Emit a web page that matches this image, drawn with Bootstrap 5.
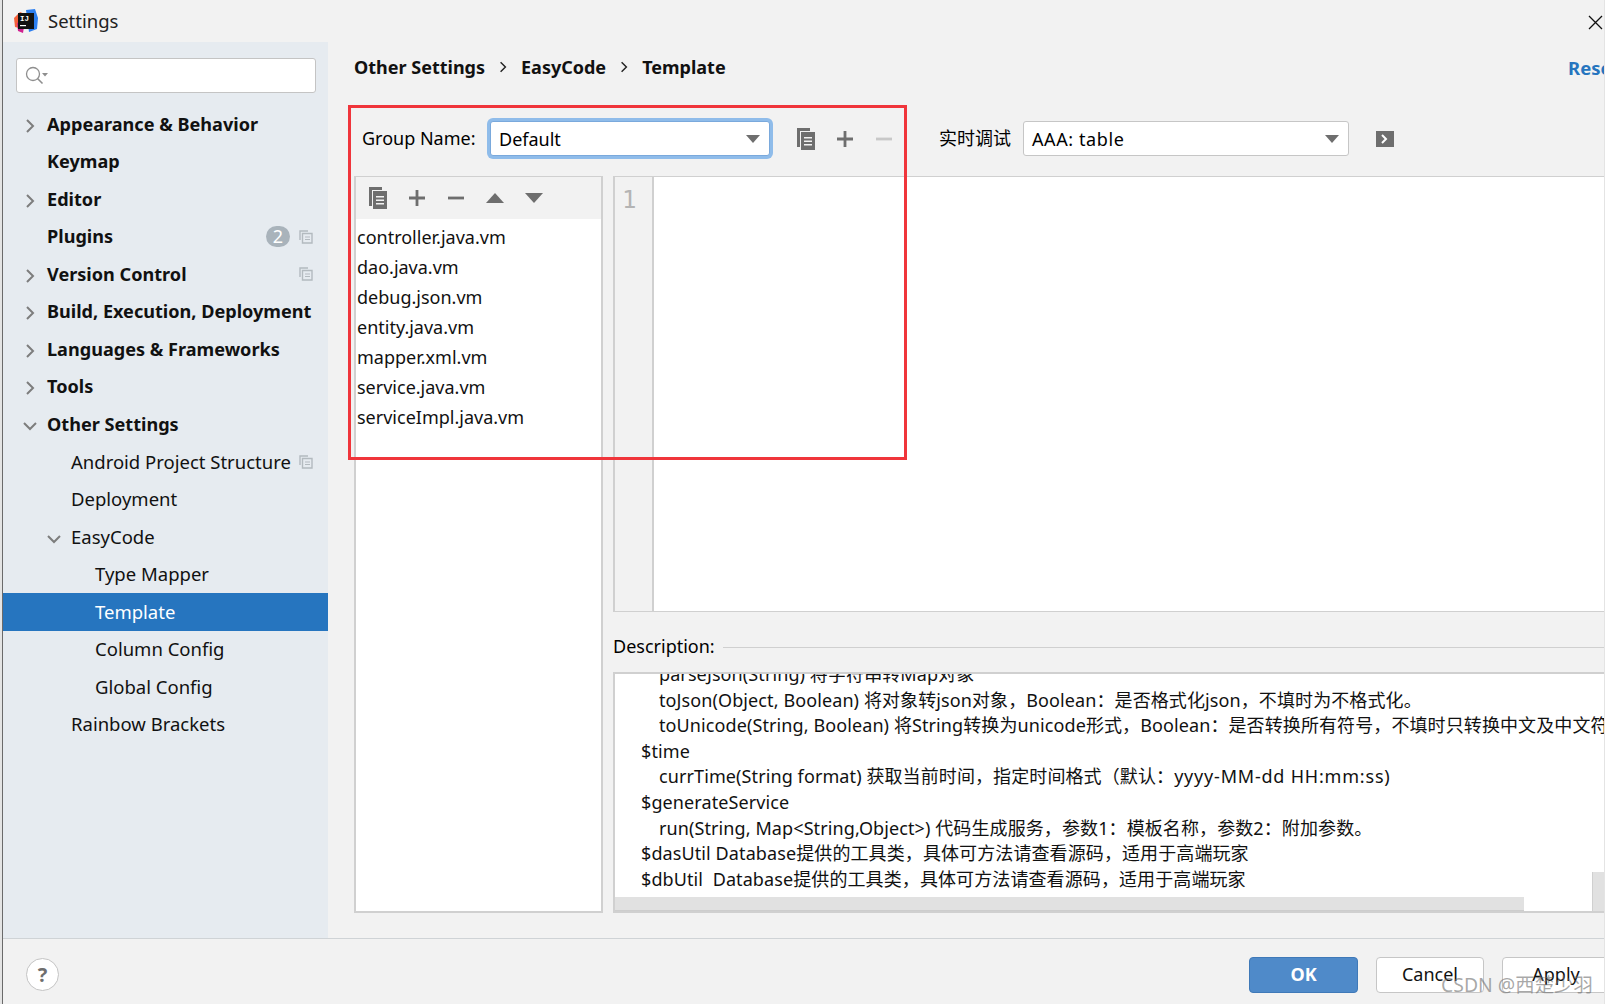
<!DOCTYPE html>
<html lang="zh-CN">
<head>
    <meta charset="UTF-8">
    <title>Settings</title>
    <link href="https://cdn.jsdelivr.net/npm/bootstrap@5.3.3/dist/css/bootstrap.min.css" rel="stylesheet">
    <style>
        html, body { height: 100%; overflow: hidden; }
        body {
            background-color: #e4e4e4;
            color: #000;
            font-family: "Noto Sans", "Noto Sans CJK SC", sans-serif;
            font-size: 18px;
        }
        .settings-win {
            width: 1602px;
            height: 1004px;
            margin-left: 2px;
            border-left: 1px solid #6a6a6a;
            background-color: #f2f2f2;
            position: relative;
            overflow: hidden;
        }
        .title-bar { height: 42px; padding-left: 11px; font-size: 18.5px; flex: none; }
        .title-text { margin-left: 10px; color: #222; }
        .close-x { position: absolute; left: 1585px; top: 15px; }

        /* sidebar */
        .side-pane { width: 325px; background-color: #e6ebf0; flex: none; }
        .search-box {
            margin: 16px 12px 12.5px 13px;
            height: 35px;
            width: 300px;
            background-color: #fff;
            border: 1px solid #c4c4c4;
            border-radius: 3px;
            padding-left: 8px;
        }
        .tree-row { height: 37.5px; padding-right: 15px; font-size: 18.5px; color: #111; white-space: nowrap; }
        .tree-row .arrow-slot { width: 44px; flex: none; padding-left: 22px; }
        .arrow-slot .open-arrow { margin-left: -2px; }
        .lvl-1 .arrow-slot { width: 68px; padding-left: 46px; }
        .lvl-2 .arrow-slot { width: 92px; }
        .tree-top { font-weight: 700; font-size: 18.1px; }
        .tree-row.is-current { background-color: #2675bf; color: #fff; }
        .count-pill {
            width: 24px;
            height: 21px;
            line-height: 21px;
            border-radius: 11px;
            background-color: #a9b3bb;
            color: #fff;
            text-align: center;
            font-size: 18px;
            margin-right: 9px;
        }

        /* main pane */
        .main-pane { padding: 0 0 25px 27px; min-width: 0; flex: 1 1 auto; }
        .crumb-row { height: 50px; font-weight: 700; font-size: 18px; flex: none; margin-left: -1px; }
        .crumb-row .breadcrumb { margin: 0; color: #111; }
        .crumb-sep { margin: 0 14px; }
        .reset-link { position: absolute; left: 1565px; top: 54px; color: #2675bf; font-weight: 700; font-size: 18.5px; text-decoration: none; }
        .group-row { height: 35px; margin: 29px 0 20px; flex: none; }
        .group-label { margin-left: 7px; width: 128px; }
        .combo-box {
            height: 35px;
            background-color: #fff;
            border: 1px solid #c6c6c6;
            border-radius: 3px;
            padding: 1px 9px 0 8px;
            flex: none;
        }
        .combo-focus { width: 280px; border-color: #7aa9dc; box-shadow: 0 0 0 3px #8fbcea; }
        .combo-plain { width: 326px; margin-left: -1px; }
        .combo-wide-text { letter-spacing: .6px; }
        .debug-label { margin-left: 36px; width: 85px; font-size: 18px; flex: none; }
        .tool-btn { width: 39px; height: 24px; }
        .group-tools { margin-left: 16px; }
        .run-icon { margin-left: 27px; }

        .work-area { min-height: 0; gap: 10px; }
        .file-pane { width: 249px; margin-left: -1px; flex: none; border: 2px solid #d0d0d0; background-color: #fff; border-top-width: 1px; }
        .file-tools { height: 42px; background-color: #f2f2f2; padding-left: 2px; }
        .file-list { padding-top: 3px; }
        .file-list .list-group-item { padding: 0 0 0 1px; height: 30px; line-height: 30px; border: 0; background: transparent; color: #111; }
        .editor-col { min-width: 0; }
        .editor-box { height: 436px; border-top: 1px solid #d0d0d0; border-bottom: 1px solid #d0d0d0; background-color: #fff; flex: none; }
        .line-gutter {
            width: 41px;
            background-color: #f2f2f2;
            border-left: 2px solid #d0d0d0;
            border-right: 2px solid #d0d0d0;
            color: #b4b4b4;
            font-size: 24px;
            padding-left: 7px;
            line-height: 46px;
            font-family: "DejaVu Sans Mono", monospace;
        }
        .desc-head { height: 60px; padding-top: 9px; flex: none; }
        .desc-rule { height: 1px; background-color: #d0d0d0; margin: 1px 0 0 8px; }
        .desc-box {
            height: 241px;
            border: 2px solid #d0d0d0;
            border-right: 0;
            background-color: #fff;
            overflow: hidden;
            position: relative;
            flex: none;
        }
        .desc-lines { margin-top: -12px; padding-left: 26px; line-height: 25.6px; font-size: 18px; letter-spacing: .1px; color: #111; }
        .desc-lines > div { white-space: pre; }
        .desc-lines .sub-line { padding-left: 18px; }
        .date-fmt { letter-spacing: .8px; }
        .h-thumb { position: absolute; left: 0; width: 909px; top: 223px; height: 14px; background-color: #e1e1e1; border-bottom: 1px solid #cdcdcd; }
        .v-thumb { position: absolute; left: 977px; top: 198px; width: 13px; height: 39px; background-color: #e1e1e1; border-left: 1px solid #d0d0d0; }

        /* footer */
        .foot-bar { height: 66px; border-top: 1px solid #cfd3d6; flex: none; padding: 6px 0 0 23px; }
        .help-btn {
            width: 33px;
            height: 33px;
            border-radius: 50%;
            background-color: #fff;
            border: 1px solid #c4c4c4;
            color: #6e6e6e;
            font-weight: 700;
            font-size: 20px;
            text-align: center;
            line-height: 31px;
            flex: none;
        }
        .dialog-btns { margin-left: 1190px; gap: 18px; }
        .dialog-btn {
            width: 108px;
            height: 36px;
            padding: 0;
            font-size: 18px;
            border-radius: 4px;
            background-color: #fff;
            border: 1px solid #c6c6c6;
            color: #111;
            flex: none;
        }
        .dialog-btn.btn-primary { background-color: #4f8ac9; border-color: #3f79b8; color: #fff; font-weight: 700; width: 109px; }
        .red-mark { position: absolute; left: 345px; top: 105px; width: 559px; height: 355px; border: 3px solid #f0353b; pointer-events: none; }
        .csdn-mark { position: absolute; left: 1438px; top: 970px; color: rgba(110,110,110,.6); font-size: 19.4px; white-space: nowrap; }
    </style>
</head>
<body>
    <svg width="0" height="0" class="position-absolute">
        <symbol id="ic-copy" viewBox="0 0 20 24">
            <path fill="#6e6e6e" d="M1 1h13v3H4v16H1z"/>
            <path fill="#6e6e6e" d="M5 5h14v18H5z"/>
            <path fill="#f2f2f2" d="M8 10h8v1.6H8zM8 13.5h8v1.6H8zM8 17h8v1.6H8z"/>
        </symbol>
        <symbol id="ic-plus" viewBox="0 0 16 16"><path fill="#6e6e6e" d="M6.600 0h2.800v6.600H16v2.800H9.400V16H6.600V9.400H0V6.600h6.600z"/></symbol>
        <symbol id="ic-minus" viewBox="0 0 16 16"><path fill="currentColor" d="M0 6.600h16v2.800H0z"/></symbol>
        <symbol id="ic-up" viewBox="0 0 18 10"><path fill="#6e6e6e" d="M9 0l9 10H0z"/></symbol>
        <symbol id="ic-down" viewBox="0 0 18 10"><path fill="#6e6e6e" d="M0 0h18L9 10z"/></symbol>
        <symbol id="ic-right" viewBox="0 0 10 14"><path fill="none" stroke="#7d7d7d" stroke-width="2" d="M2 1l6 6-6 6"/></symbol>
        <symbol id="ic-open" viewBox="0 0 14 10"><path fill="none" stroke="#7d7d7d" stroke-width="2" d="M1 2l6 6 6-6"/></symbol>
        <symbol id="ic-proj" viewBox="0 0 14 14">
            <path fill="none" stroke="#b3babf" stroke-width="1.400" d="M1 10V1h8M3.500 3.500h9.500v9.500H3.500z"/>
            <path stroke="#b3babf" stroke-width="1.200" d="M6 7h5M6 9.500h5"/>
        </symbol>
    </svg>

    <div class="settings-win d-flex flex-column">
        <!-- barra de titulo -->
        <div class="title-bar d-flex align-items-center">
            <svg width="24" height="24" viewBox="0 0 24 24">
                <path fill="#f5603a" d="M0 9l6-6 5 2-6 14-4-1z"/>
                <path fill="#d0218f" d="M3 14l8-2-2 12-5-2z"/>
                <path fill="#2d7ff0" d="M12 1l9-1 3 9-1 11-8 3z"/>
                <rect x="4" y="4" width="16" height="16" fill="#111"/>
                <text x="6" y="12" fill="#fff" font-size="7.500" font-weight="700" font-family="Liberation Mono, monospace">IJ</text>
                <rect x="6" y="16" width="6" height="1.200" fill="#fff"/>
            </svg>
            <span class="title-text">Settings</span>
        </div>
        <svg class="close-x" width="15" height="15" viewBox="0 0 15 15"><path stroke="#111" stroke-width="1.300" d="M1 1l13 13M14 1L1 14"/></svg>

        <div class="d-flex flex-grow-1" style="min-height:0">
            <!-- arbol lateral -->
            <div class="side-pane">
                <div class="search-box d-flex align-items-center">
                    <svg width="24" height="20" viewBox="0 0 24 20">
                        <circle cx="8" cy="8" r="6.500" fill="none" stroke="#8e8e8e" stroke-width="1.300"/>
                        <path stroke="#8e8e8e" stroke-width="1.600" d="M12.500 12.500l5 5"/>
                        <path fill="#8e8e8e" d="M17 7h6l-3 3.500z"/>
                    </svg>
                </div>
                <div class="tree-row tree-top d-flex align-items-center"><span class="arrow-slot"><svg width="10" height="14"><use href="#ic-right"/></svg></span>Appearance &amp; Behavior</div>
                <div class="tree-row tree-top d-flex align-items-center"><span class="arrow-slot"></span>Keymap</div>
                <div class="tree-row tree-top d-flex align-items-center"><span class="arrow-slot"><svg width="10" height="14"><use href="#ic-right"/></svg></span>Editor</div>
                <div class="tree-row tree-top d-flex align-items-center"><span class="arrow-slot"></span>Plugins<span class="count-pill ms-auto fw-normal">2</span><svg width="14" height="14"><use href="#ic-proj"/></svg></div>
                <div class="tree-row tree-top d-flex align-items-center"><span class="arrow-slot"><svg width="10" height="14"><use href="#ic-right"/></svg></span>Version Control<svg class="ms-auto" width="14" height="14"><use href="#ic-proj"/></svg></div>
                <div class="tree-row tree-top d-flex align-items-center"><span class="arrow-slot"><svg width="10" height="14"><use href="#ic-right"/></svg></span>Build, Execution, Deployment</div>
                <div class="tree-row tree-top d-flex align-items-center"><span class="arrow-slot"><svg width="10" height="14"><use href="#ic-right"/></svg></span>Languages &amp; Frameworks</div>
                <div class="tree-row tree-top d-flex align-items-center"><span class="arrow-slot"><svg width="10" height="14"><use href="#ic-right"/></svg></span>Tools</div>
                <div class="tree-row tree-top d-flex align-items-center"><span class="arrow-slot"><svg class="open-arrow" width="14" height="10"><use href="#ic-open"/></svg></span>Other Settings</div>
                <div class="tree-row lvl-1 d-flex align-items-center"><span class="arrow-slot"></span>Android Project Structure<svg class="ms-auto" width="14" height="14"><use href="#ic-proj"/></svg></div>
                <div class="tree-row lvl-1 d-flex align-items-center"><span class="arrow-slot"></span>Deployment</div>
                <div class="tree-row lvl-1 d-flex align-items-center"><span class="arrow-slot"><svg class="open-arrow" width="14" height="10"><use href="#ic-open"/></svg></span>EasyCode</div>
                <div class="tree-row lvl-2 d-flex align-items-center"><span class="arrow-slot"></span>Type Mapper</div>
                <div class="tree-row lvl-2 is-current d-flex align-items-center"><span class="arrow-slot"></span>Template</div>
                <div class="tree-row lvl-2 d-flex align-items-center"><span class="arrow-slot"></span>Column Config</div>
                <div class="tree-row lvl-2 d-flex align-items-center"><span class="arrow-slot"></span>Global Config</div>
                <div class="tree-row lvl-1 d-flex align-items-center"><span class="arrow-slot"></span>Rainbow Brackets</div>
            </div>

            <!-- panel principal -->
            <div class="main-pane d-flex flex-column">
                <div class="crumb-row d-flex align-items-center">
                    <div class="breadcrumb align-items-center">
                        <span>Other Settings</span>
                        <svg class="crumb-sep" width="8" height="12" viewBox="0 0 10 14"><path fill="none" stroke="#222" stroke-width="1.800" d="M2 1l6 6-6 6"/></svg>
                        <span>EasyCode</span>
                        <svg class="crumb-sep" width="8" height="12" viewBox="0 0 10 14"><path fill="none" stroke="#222" stroke-width="1.800" d="M2 1l6 6-6 6"/></svg>
                        <span>Template</span>
                    </div>
                </div>
                <a class="reset-link" href="#">Reset</a>

                <div class="group-row d-flex align-items-center">
                    <span class="group-label">Group Name:</span>
                    <div class="combo-box combo-focus d-flex align-items-center justify-content-between">
                        <span>Default</span>
                        <svg width="14" height="8"><use href="#ic-down"/></svg>
                    </div>
                    <div class="group-tools d-flex align-items-center">
                        <span class="tool-btn d-flex align-items-center justify-content-center"><svg width="20" height="24"><use href="#ic-copy"/></svg></span>
                        <span class="tool-btn d-flex align-items-center justify-content-center"><svg width="16" height="16"><use href="#ic-plus"/></svg></span>
                        <span class="tool-btn d-flex align-items-center justify-content-center" style="color:#c8c8c8"><svg width="16" height="16"><use href="#ic-minus"/></svg></span>
                    </div>
                    <span class="debug-label">实时调试</span>
                    <div class="combo-box combo-plain d-flex align-items-center justify-content-between">
                        <span class="combo-wide-text">AAA: table</span>
                        <svg width="14" height="8"><use href="#ic-down"/></svg>
                    </div>
                    <svg class="run-icon" width="18" height="16" viewBox="0 0 18 16">
                        <rect width="18" height="16" fill="#6e6e6e"/>
                        <path fill="none" stroke="#fff" stroke-width="2" d="M6 4l4 4-4 4"/>
                    </svg>
                </div>

                <div class="work-area d-flex flex-grow-1">
                    <!-- lista de plantillas -->
                    <div class="file-pane">
                        <div class="file-tools d-flex align-items-center">
                            <span class="tool-btn d-flex align-items-center justify-content-center"><svg width="20" height="24"><use href="#ic-copy"/></svg></span>
                            <span class="tool-btn d-flex align-items-center justify-content-center"><svg width="16" height="16"><use href="#ic-plus"/></svg></span>
                            <span class="tool-btn d-flex align-items-center justify-content-center" style="color:#6e6e6e"><svg width="16" height="16"><use href="#ic-minus"/></svg></span>
                            <span class="tool-btn d-flex align-items-center justify-content-center"><svg width="18" height="10"><use href="#ic-up"/></svg></span>
                            <span class="tool-btn d-flex align-items-center justify-content-center"><svg width="18" height="10"><use href="#ic-down"/></svg></span>
                        </div>
                        <div class="file-list list-group list-group-flush">
                            <div class="list-group-item">controller.java.vm</div>
                            <div class="list-group-item">dao.java.vm</div>
                            <div class="list-group-item">debug.json.vm</div>
                            <div class="list-group-item">entity.java.vm</div>
                            <div class="list-group-item">mapper.xml.vm</div>
                            <div class="list-group-item">service.java.vm</div>
                            <div class="list-group-item">serviceImpl.java.vm</div>
                        </div>
                    </div>

                    <!-- editor y descripcion -->
                    <div class="editor-col d-flex flex-column flex-grow-1">
                        <div class="editor-box d-flex">
                            <div class="line-gutter">1</div>
                        </div>
                        <div class="desc-head d-flex align-items-center">
                            <span>Description:</span>
                            <div class="desc-rule flex-grow-1"></div>
                        </div>
                        <div class="desc-box">
                            <div class="desc-lines">
                                <div class="sub-line">parseJson(String) 将字符串转Map对象</div>
                                <div class="sub-line">toJson(Object, Boolean) 将对象转json对象，Boolean：是否格式化json，不填时为不格式化。</div>
                                <div class="sub-line">toUnicode(String, Boolean) 将String转换为unicode形式，Boolean：是否转换所有符号，不填时只转换中文及中文符号。</div>
                                <div>$time</div>
                                <div class="sub-line">currTime(String format) 获取当前时间，指定时间格式（默认：<span class="date-fmt">yyyy-MM-dd HH:mm:ss)</span></div>
                                <div>$generateService</div>
                                <div class="sub-line">run(String, Map&lt;String,Object&gt;) 代码生成服务，参数1：模板名称，参数2：附加参数。</div>
                                <div>$dasUtil Database提供的工具类，具体可方法请查看源码，适用于高端玩家</div>
                                <div>$dbUtil  Database提供的工具类，具体可方法请查看源码，适用于高端玩家</div>
                            </div>
                            <div class="h-thumb"></div>
                            <div class="v-thumb"></div>
                        </div>
                    </div>
                </div>
            </div>
        </div>

        <!-- pie -->
        <div class="foot-bar d-flex align-items-center">
            <div class="help-btn">?</div>
            <div class="dialog-btns d-flex">
                <button class="btn btn-primary dialog-btn">OK</button>
                <button class="btn dialog-btn">Cancel</button>
                <button class="btn dialog-btn">Apply</button>
            </div>
        </div>

        <div class="red-mark"></div>
        <div class="csdn-mark">CSDN @西楚少羽</div>
    </div>

    <script src="https://cdn.jsdelivr.net/npm/bootstrap@5.3.3/dist/js/bootstrap.bundle.min.js"></script>
</body>
</html>
